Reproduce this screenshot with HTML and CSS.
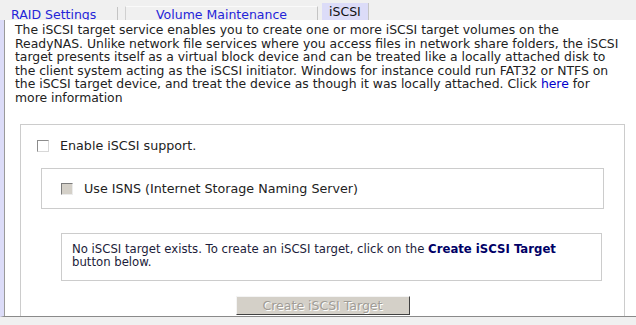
FILE: index.html
```html
<!DOCTYPE html>
<html lang="en">
<head>
    <meta charset="UTF-8">
    <title>iSCSI</title>
    <link rel="stylesheet" href="styles.css">
</head>
<body>

    <div class="tabs">
        <a class="tab first" href="#">RAID Settings</a>
        <a class="tab raised" href="#">Volume Maintenance</a>
        <span class="tab active">iSCSI</span>
    </div>

    <div class="panel">
        <div class="panel-body">
            <p class="intro">The iSCSI target service enables you to create one or more iSCSI target volumes on the<br>
                ReadyNAS. Unlike network file services where you access files in network share folders, the iSCSI<br>
                target presents itself as a virtual block device and can be treated like a locally attached disk to<br>
                the client system acting as the iSCSI initiator. Windows for instance could run FAT32 or NTFS on<br>
                the iSCSI target device, and treat the device as though it was locally attached. Click <a href="#">here</a> for<br>
                more information</p>

            <div class="group">
                <label class="check-row">
                    <input type="checkbox" class="check">
                    <span>Enable iSCSI support.</span>
                </label>

                <div class="box isns">
                    <label class="check-row">
                        <input type="checkbox" class="check" disabled>
                        <span>Use ISNS (Internet Storage Naming Server)</span>
                    </label>
                </div>

                <div class="box notice">
                    No iSCSI target exists. To create an iSCSI target, click on the <b>Create iSCSI Target</b> button below.
                </div>

                <div class="actions">
                    <button class="btn" disabled>Create iSCSI Target</button>
                </div>
            </div>
        </div>
    </div>

</body>
</html>
```

FILE: styles.css
```css
body {
    margin: 0;
    background-color: #f0f0f0;
    font-family: "DejaVu Sans", Verdana, sans-serif;
    color: #222;
}
.tabs {
    display: flex;
    align-items: flex-end;
    height: 20px;
    overflow: hidden;
}
.tab {
    font-size: 12.5px;
    line-height: 17px;
    height: 17px;
    text-decoration: none;
    color: #2424d8;
    white-space: nowrap;
}
.tab.first {
    width: 106px;
    padding-left: 11px;
    height: 16px;
    border-right: 1px solid #c4c4c4;
    line-height: 16px;
    position: relative;
    top: 3px;
}
.tab.raised {
    width: 191px;
    margin-left: 7px;
    height: 15px;
    text-align: center;
    border-top: 1px solid #fafafa;
    border-left: 1px solid #d0d0d0;
    border-right: 1px solid #c4c4c4;
    line-height: 16px;
    position: relative;
    top: 2px;
}
.tab.active {
    margin-left: 4px;
    padding: 0 7px;
    background-color: #dcdcf8;
    color: #111;
    border-right: 1px solid #c4c4c4;
}
.panel {
    height: 296px;
    overflow: hidden;
    background-color: #fff;
    border-left: 4px solid #dcdcf8;
    border-bottom: 1px solid #8a8a8a;
}
.panel-body {
    height: 100%;
    border-left: 1px solid #9a9a9a;
    padding: 3px 0 0 10px;
}
.intro {
    margin: 0;
    font-size: 12.4px;
    line-height: 13.5px;
    white-space: nowrap;
}
.intro a {
    color: #0000cc;
    text-decoration: none;
}
.group {
    margin: 20px 11px 0 5px;
    border: 1px solid #cccccc;
    border-bottom: none;
    height: 200px;
    padding: 13px 20px 0 20px;
}
.check-row {
    display: flex;
    align-items: center;
    gap: 11px;
    font-size: 12.7px;
}
.group > .check-row {
    margin-left: -4px;
}
.check {
    appearance: none;
    -webkit-appearance: none;
    margin: 0;
    width: 12px;
    height: 12px;
    background: #fff;
    border: 1px solid #8c8c8c;
    border-right-color: #d8d8d8;
    border-bottom-color: #d8d8d8;
}
.check:disabled {
    background: #d4d0c8;
    border-color: #7c7c7c #ececec #ececec #7c7c7c;
}
.box {
    border: 1px solid #cccccc;
}
.isns {
    margin-top: 15px;
    height: 39px;
    padding-left: 19px;
    display: flex;
    align-items: center;
}
.notice {
    margin: 24px 2px 0 20px;
    padding: 9px 10px 0 10px;
    height: 37px;
    font-size: 11.7px;
    line-height: 13px;
    color: #1c1c3a;
}
.notice b {
    color: #000066;
}
.actions {
    margin-top: 15px;
    display: flex;
    justify-content: center;
}
.btn {
    width: 174px;
    height: 19px;
    padding: 0;
    font-family: "DejaVu Sans", Verdana, sans-serif;
    font-size: 12.5px;
    color: #a09c96;
    text-shadow: 1px 1px 0 #fff;
    background-color: #d4d0c8;
    border: 1px solid;
    border-color: #f4f4f4 #404040 #404040 #f4f4f4;
}
```
